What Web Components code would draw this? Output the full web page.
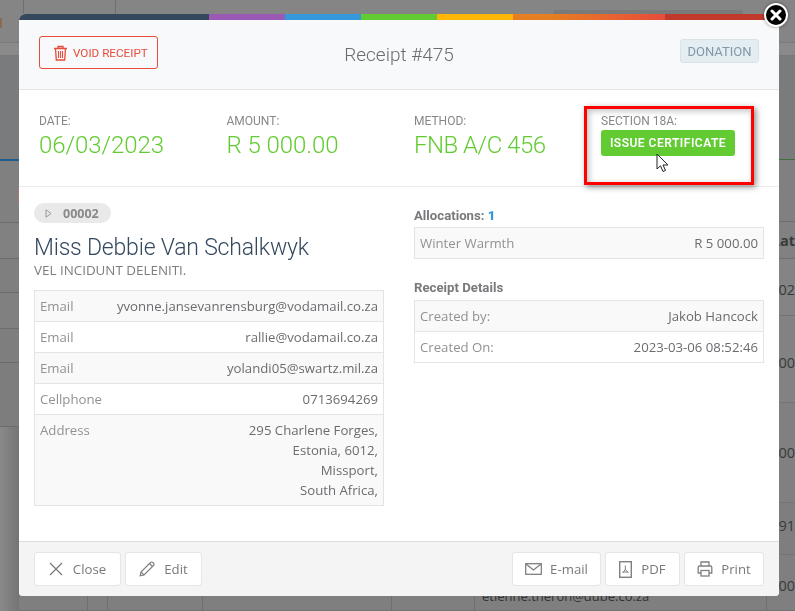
<!DOCTYPE html>
<html>
<head>
<meta charset="utf-8">
<title>Receipt #475</title>
<style>
html,body{margin:0;height:100%;overflow:hidden;background:#808080}
body{font-family:"Open Sans",sans-serif;--head-font:"Roboto",sans-serif}
</style>
</head>
<body>
<page-backdrop></page-backdrop>
<receipt-modal>
  <void-button slot="head-left">VOID RECEIPT</void-button>
  <span slot="head-title">Receipt #475</span>
  <type-label slot="head-right">DONATION</type-label>

  <stat-item slot="stats" label="DATE:" value="06/03/2023" style="width:187.5px"></stat-item>
  <stat-item slot="stats" label="AMOUNT:" value="R 5 000.00" style="width:187.5px"></stat-item>
  <stat-item slot="stats" label="METHOD:" value="FNB A/C 456" style="width:187px;--value-spacing:-.5px"></stat-item>
  <section-box slot="stats">ISSUE CERTIFICATE</section-box>

  <member-head slot="left" code="00002" name="Miss Debbie Van Schalkwyk" sub="VEL INCIDUNT DELENITI."></member-head>
  <info-table slot="left">
    <info-row label="Email">yvonne.jansevanrensburg@vodamail.co.za</info-row>
    <info-row label="Email">rallie@vodamail.co.za</info-row>
    <info-row label="Email">yolandi05@swartz.mil.za</info-row>
    <info-row label="Cellphone">0713694269</info-row>
    <info-row label="Address">295 Charlene Forges,<br>Estonia, 6012,<br>Missport,<br>South Africa,</info-row>
  </info-table>

  <side-title slot="right">Allocations: <b>1</b></side-title>
  <info-table slot="right">
    <info-row label="Winter Warmth">R 5 000.00</info-row>
  </info-table>
  <side-title slot="right" style="margin:20px 0 3px">Receipt Details</side-title>
  <info-table slot="right">
    <info-row label="Created by:">Jakob Hancock</info-row>
    <info-row label="Created On:">2023-03-06 08:52:46</info-row>
  </info-table>

  <foot-button slot="foot-left" icon="close" style="width:87px;gap:10px">Close</foot-button>
  <foot-button slot="foot-left" icon="edit" style="width:77px;gap:9px">Edit</foot-button>
  <foot-button slot="foot-right" icon="mail" style="width:89px">E-mail</foot-button>
  <foot-button slot="foot-right" icon="pdf" style="width:75px;gap:9px">PDF</foot-button>
  <foot-button slot="foot-right" icon="print" style="width:80px">Print</foot-button>
</receipt-modal>

<script>
// the dimmed page behind the modal, rows laid out top to bottom
// [height, colour, cell text, line colour, pad top, pad bottom]
class PageBackdrop extends HTMLElement {
  constructor(){
    super()
    let rows = [[43,'#858585','','#7b7b7b',0,0],[13,'#8a8a8a','','#787878',0,0],[104,'#797b7d','','#3f6f3a',0,0],[62,'#808080','','#6f6f6f',0,0]
      ,[37,'#818181','Lat','#6f6f6f',0,0],[57,'#848484','302','#727272',4,0],[87,'#828282','500','#747474',6,0],[100,'#808080','500','#747474',0,0],[52,'#7e7e7e','91','#747474',0,6],[56,'#7f7f7f','500','#747474',6,0]]
    let html = rows.map(r=>`<div class="row" style="height:${r[0]}px;background:${r[1]};border-bottom-color:${r[3]};padding:${r[4]}px 0 ${r[5]}px">${r[2]?`<span>${r[2]}</span>`:''}</div>`).join('')
    let left = [[62,'#808080'],[36,'#818181'],[34,'#7f7f7f'],[36,'#808080'],[34,'#7e7e7e'],[64,'#7d7d7d']]
    let lefthtml = left.map(r=>`<div style="height:${r[0]}px;background:${r[1]}"></div>`).join('')
    this.attachShadow({mode:'open'}).innerHTML = `
    <style>
    :host{display:block;position:fixed;inset:0;overflow:hidden;font:14.5px "Open Sans",sans-serif;color:#333}
    .row{box-sizing:border-box;border-bottom:1px solid #6f6f6f;display:flex;align-items:center;justify-content:flex-end}
    .row span{color:#3a3a3a;white-space:nowrap}
    .row:nth-child(6) span{font-weight:700;font-size:14.5px}
    .left{position:absolute;left:0;top:161px;width:19px}
    .left div{box-sizing:border-box;border-bottom:1px solid #6c6c6c}
    .low{position:absolute;left:0;top:427px;bottom:0;width:19px;background:linear-gradient(90deg,#8a8a8a,#747474)}
    .leftbar{position:absolute;left:0;top:159px;width:19px;height:2px;background:#1f5c8c}
    .topbox{position:absolute;left:553px;top:10px;width:190px;height:10px;background:#7a7a7a;border-radius:4px 4px 0 0}
    .mail{position:absolute;left:482px;top:587px;font-size:13px;color:#333}
    .v{position:absolute;top:596px;bottom:0;width:1px;background:#6f6f6f}
    .t{position:absolute;top:0;height:14px;width:1px;background:#707070}
    .o{position:absolute;left:0;top:18px;width:2px;height:10px;background:#8a6a50}
    .p{position:absolute;left:18px;top:187px;width:1px;height:16px;background:#a57a6e}
    </style>
    ${html}
    <div class="left">${lefthtml}</div><div class="low"></div>
    <div class="leftbar"></div><div class="topbox"></div>
    <div class="t" style="left:23px"></div><div class="t" style="left:115px"></div>
    <div class="o"></div><div class="p"></div>
    <div class="v" style="left:87px"></div><div class="v" style="left:107px"></div><div class="v" style="left:202px"></div>
    <div class="v" style="left:391px"></div><div class="v" style="left:474px"></div><div class="v" style="left:766px"></div>
    <div class="mail">etienne.theron@dube.co.za</div>`
  }
}
customElements.define('page-backdrop',PageBackdrop)

let modalTmpl = document.createElement('template')
modalTmpl.innerHTML = `
<style>
:host{display:flex;flex-direction:column;position:absolute;left:19px;top:14px;width:760px;height:582px;background:#fff;border-radius:6px 6px 4px 4px;color:#6a6c6f}
.line{height:6px;flex:none;border-radius:6px 6px 0 0;background:linear-gradient(to right,#34495e 0,#34495e 25%,#9b59b6 25%,#9b59b6 35%,#3498db 35%,#3498db 45%,#62cb31 45%,#62cb31 55%,#ffb606 55%,#ffb606 65%,#e67e22 65%,#e67e22 70%,#e74c3c 85%,#c0392b 85%,#c0392b 100%)}
.head{height:70px;flex:none;box-sizing:border-box;background:#f7f9fa;border-bottom:1px solid #e4e5e7;display:grid;grid-template-columns:1fr auto 1fr;align-items:center;padding:0 20px}
.head .l{justify-self:start;display:flex;margin-top:-4px}
.head .r{justify-self:end;display:flex;margin-top:-7px}
.title{font:300 19px/24px var(--head-font);color:#6a6c6f;margin-top:1px}
.stats{height:97px;flex:none;box-sizing:border-box;border-bottom:1px solid #ebebeb;display:flex;padding:23px 0 0 20px}
.body{flex:1;display:grid;grid-template-columns:350px 350px;column-gap:30px;padding:16px 15px 0}
.col{display:block}
.foot{height:55px;flex:none;box-sizing:border-box;background:#f4f4f4;border-top:1px solid #dcdcdc;border-radius:0 0 4px 4px;display:flex;justify-content:space-between;padding:10px 15px 0}
.foot div{display:flex;gap:4px}
.x{position:absolute;left:745px;top:-11px;width:24px;height:24px;box-sizing:border-box;border-radius:50%;background:#000;border:2px solid #fff;box-shadow:0 0 3px rgba(0,0,0,.5);display:flex;align-items:center;justify-content:center}
</style>
<div class="line"></div>
<div class="head">
  <div class="l"><slot name="head-left"></slot></div>
  <div class="title"><slot name="head-title"></slot></div>
  <div class="r"><slot name="head-right"></slot></div>
</div>
<div class="stats"><slot name="stats"></slot></div>
<div class="body">
  <div class="col"><slot name="left"></slot></div>
  <div class="col"><slot name="right"></slot></div>
</div>
<div class="foot">
  <div><slot name="foot-left"></slot></div>
  <div><slot name="foot-right"></slot></div>
</div>
<div class="x"><svg width="12" height="12" viewBox="0 0 12 12"><path d="M2 2L10 10M10 2L2 10" stroke="#fff" stroke-width="3" stroke-linecap="round"/></svg></div>
`
class ReceiptModal extends HTMLElement {
  constructor(){
    super()
    this.attachShadow({mode:'open'}).appendChild(modalTmpl.content.cloneNode(true))
  }
}
customElements.define('receipt-modal',ReceiptModal)

class VoidButton extends HTMLElement {
  constructor(){
    super()
    this.attachShadow({mode:'open'}).innerHTML = `
    <style>
    :host{display:flex;align-items:center;box-sizing:border-box;width:119px;height:33px;border:1px solid #e74c3c;border-radius:3px;padding-left:13px;gap:5px;color:#e74c3c;font:400 11.7px var(--head-font)}
    svg{flex:none}
    </style>
    <svg width="15" height="16" viewBox="0 0 15 16" fill="none" stroke="#e74c3c" stroke-width="1.3">
      <path d="M1 3.5H14M5 3.5V1.5H10V3.5M2.5 3.5L3.3 15H11.7L12.5 3.5"/>
      <path d="M5.5 6V13M7.5 6V13M9.5 6V13" stroke-width="1.1"/>
    </svg>
    <span><slot></slot></span>`
  }
}
customElements.define('void-button',VoidButton)

class TypeLabel extends HTMLElement {
  constructor(){
    super()
    this.attachShadow({mode:'open'}).innerHTML = `
    <style>
    :host{display:flex;align-items:center;justify-content:center;box-sizing:border-box;width:79px;height:24px;background:#e4edf1;border:1px solid #d8e2e7;border-radius:3px;color:#8398a8;font:400 13px var(--head-font)}
    </style><slot></slot>`
  }
}
customElements.define('type-label',TypeLabel)

class StatItem extends HTMLElement {
  constructor(){
    super()
    this.attachShadow({mode:'open'}).innerHTML = `
    <style>
    :host{display:block;flex:none}
    .k{font:400 12px/16px var(--head-font);color:#85878a}
    .v{font:300 24px/30px var(--head-font);color:#62cb31;margin-top:1px;letter-spacing:var(--value-spacing,-.05px)}
    </style>
    <div class="k">${this.getAttribute('label')}</div>
    <div class="v">${this.getAttribute('value')}</div>`
  }
}
customElements.define('stat-item',StatItem)

// red marker round the certificate button, plus the mouse pointer lying on it
class SectionBox extends HTMLElement {
  constructor(){
    super()
    this.attachShadow({mode:'open'}).innerHTML = `
    <style>
    :host{display:block;position:relative;flex:none;width:134px}
    .k{font:400 12px/16px var(--head-font);color:#85878a}
    .btn{height:26px;margin-top:1px;background:#62cb31;border-radius:3px;color:#fff;font:600 12px/26px var(--head-font);letter-spacing:.5px;text-align:center}
    .mark{position:absolute;left:-17px;top:-7px;width:170px;height:79px;box-sizing:border-box;border:3px solid #f00;box-shadow:2px 2px 6px rgba(0,0,0,.45),inset 2px 2px 6px rgba(0,0,0,.25);pointer-events:none}
    svg{position:absolute;left:55px;top:40px}
    </style>
    <div class="k">SECTION 18A:</div>
    <div class="btn"><slot></slot></div>
    <div class="mark"></div>
    <svg width="14" height="21" viewBox="0 0 14 21"><path d="M1 1V16L4.5 12.8L7 18.5L9.5 17.4L7 12H12Z" fill="#fff" stroke="#222" stroke-width="1"/></svg>`
  }
}
customElements.define('section-box',SectionBox)

class MemberHead extends HTMLElement {
  constructor(){
    super()
    this.attachShadow({mode:'open'}).innerHTML = `
    <style>
    :host{display:block;margin-bottom:11px}
    .pill{display:flex;align-items:center;height:20px;width:77px;box-sizing:border-box;padding-left:11px;gap:11px;background:#e9e9e9;border-radius:10px;color:#8a8a8a;font:700 12.5px "Open Sans",sans-serif}
    .name{font:300 23px/27px var(--head-font);letter-spacing:-.2px;color:#34495e;margin-top:11px}
    .sub{font:400 13.4px/18px "Open Sans",sans-serif;color:#7b7d80}
    </style>
    <div class="pill"><svg width="7" height="9" viewBox="0 0 7 9"><path d="M1 .8V8.2L6 4.5Z" fill="none" stroke="#999" stroke-width="1"/></svg>${this.getAttribute('code')}</div>
    <div class="name">${this.getAttribute('name')}</div>
    <div class="sub">${this.getAttribute('sub')}</div>`
  }
}
customElements.define('member-head',MemberHead)

class SideTitle extends HTMLElement {
  constructor(){
    super()
    this.attachShadow({mode:'open'}).innerHTML = `
    <style>
    :host{display:block;font:700 13.2px/18px var(--head-font);color:#77797c;margin:4px 0 2px}
    ::slotted(b){color:#3498db}
    </style><slot></slot>`
  }
}
customElements.define('side-title',SideTitle)

class InfoTable extends HTMLElement {
  constructor(){
    super()
    this.attachShadow({mode:'open'}).innerHTML = `
    <style>
    :host{display:block;border:1px solid #e4e4e4;border-bottom:0}
    ::slotted(info-row:nth-child(odd)){background:#f9f9f9}
    </style><slot></slot>`
  }
}
customElements.define('info-table',InfoTable)

class InfoRow extends HTMLElement {
  constructor(){
    super()
    this.attachShadow({mode:'open'}).innerHTML = `
    <style>
    :host{display:flex;justify-content:space-between;box-sizing:border-box;padding:5px;border-bottom:1px solid #e4e4e4;font:400 13.2px/20px "Open Sans",sans-serif;color:#6a6c6f}
    .k{color:#909294}
    .v{text-align:right}
    </style>
    <div class="k">${this.getAttribute('label')}</div>
    <div class="v"><slot></slot></div>`
  }
}
customElements.define('info-row',InfoRow)

let icons = {
  close:'<svg width="14" height="14" viewBox="0 0 14 14"><path d="M1 1L13 13M13 1L1 13" stroke="#777" stroke-width="1.2" fill="none"/></svg>',
  edit:'<svg width="16" height="16" viewBox="0 0 16 16" fill="none" stroke="#808080" stroke-width="1.2"><path d="M1.2 14.8L2 11L11.5 1.5C12.2.8 13.2.8 13.9 1.5L14.5 2.1C15.2 2.8 15.2 3.8 14.5 4.5L5 14Z"/><path d="M2 11L5 14M10.5 2.5L13.5 5.5"/></svg>',
  mail:'<svg width="17" height="12" viewBox="0 0 17 12" fill="none" stroke="#808080" stroke-width="1.3"><rect x=".7" y=".7" width="15.6" height="10.6"/><path d="M1 1L8.5 7L16 1"/></svg>',
  pdf:'<svg width="13" height="17" viewBox="0 0 13 17" fill="none" stroke="#808080" stroke-width="1.4"><rect x=".7" y=".7" width="11.6" height="15.6"/><path d="M6.3 4.5V8.5L3.5 12M6.3 8.5L9.5 12M4 11H9" stroke-width="1"/></svg>',
  print:'<svg width="16" height="16" viewBox="0 0 16 16" fill="none" stroke="#808080" stroke-width="1.3"><path d="M4 5V1H12V5"/><path d="M4 12H1.2V6.5C1.2 5.7 1.7 5 2.5 5H13.5C14.3 5 14.8 5.7 14.8 6.5V12H12"/><rect x="4" y="9.5" width="8" height="5.5"/></svg>'
}
class FootButton extends HTMLElement {
  constructor(){
    super()
    this.attachShadow({mode:'open'}).innerHTML = `
    <style>
    :host{display:flex;align-items:center;justify-content:center;gap:8px;box-sizing:border-box;height:34px;background:#fff;border:1px solid #e4e5e7;border-radius:3px;font:400 13.2px "Open Sans",sans-serif;color:#77797c}
    svg{display:block}
    </style>
    ${icons[this.getAttribute('icon')]}<span><slot></slot></span>`
  }
}
customElements.define('foot-button',FootButton)
</script>
</body>
</html>
